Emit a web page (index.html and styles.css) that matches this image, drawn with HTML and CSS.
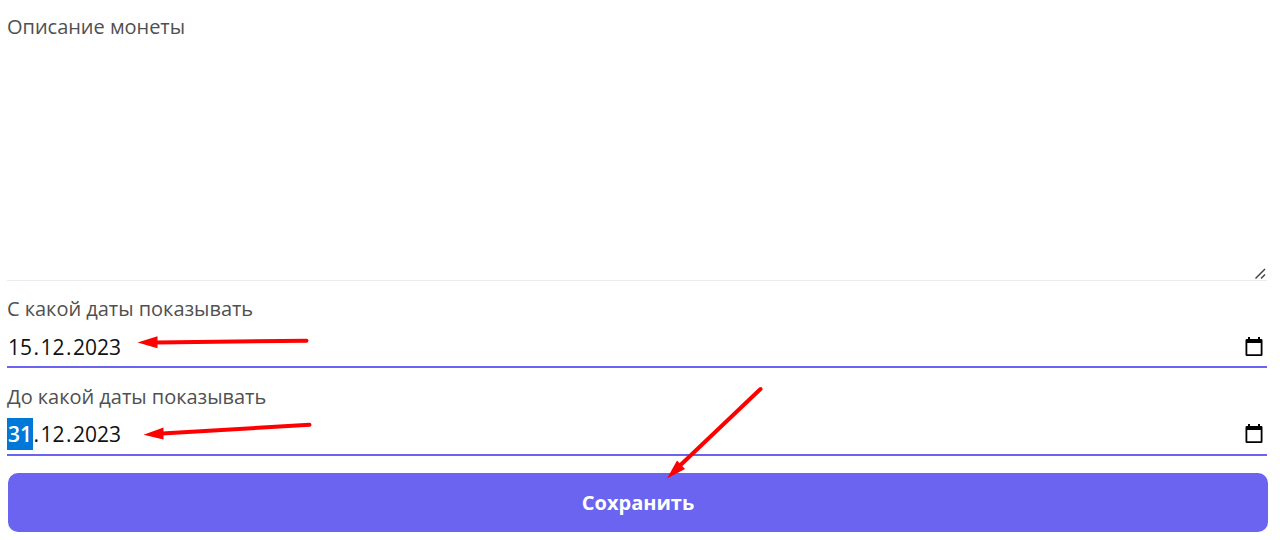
FILE: index.html
```html
<!DOCTYPE html>
<html lang="ru">
<head>
    <meta charset="UTF-8">
    <meta name="viewport" content="width=device-width, initial-scale=1.0">
    <title>Монета</title>
    <link rel="stylesheet" href="styles.css">
</head>
<body>

<form class="coin-form">
    <!-- Description -->
    <div class="field field-description">
        <label>Описание монеты</label>
        <svg class="resize-grip" width="12" height="12" viewBox="0 0 12 12">
            <path d="M.5 10.500L10 1M6 10.500L10 6.500"/>
        </svg>
    </div>

    <!-- Dates -->
    <div class="field field-date">
        <label>С какой даты показывать</label>
        <div class="date-input">
            <div class="date-value"><span>15</span>.<span>12</span>.<span>2023</span></div>
            <svg class="calendar" width="18" height="20" viewBox="0 0 18 20">
                <path d="M3 0h2v2h8V0h2v2h1.200q1.300 0 1.300 1.300V17.700q0 1.300-1.300 1.300H1.800Q.5 19 .5 17.700V3.300Q.5 2 1.800 2H3zM2.300 6V17.200H15.700V6z"/>
            </svg>
        </div>
    </div>
    <div class="field field-date">
        <label>До какой даты показывать</label>
        <div class="date-input">
            <div class="date-value"><span class="selected">31</span>.<span>12</span>.<span>2023</span></div>
            <svg class="calendar" width="18" height="20" viewBox="0 0 18 20">
                <path d="M3 0h2v2h8V0h2v2h1.200q1.300 0 1.300 1.300V17.700q0 1.300-1.300 1.300H1.800Q.5 19 .5 17.700V3.300Q.5 2 1.800 2H3zM2.300 6V17.200H15.700V6z"/>
            </svg>
        </div>
    </div>

    <button type="button" class="save">Сохранить</button>
</form>

<!-- Arrows over the form -->
<svg class="arrows" width="1280" height="540" viewBox="0 0 1280 540">
    <path class="shaft" d="M156 342.500L306.500 340.700M162 433.500L309.500 424.800M679 466.500L760.500 389"/>
    <path class="head" d="M137.500 342.500L157.500 336.300V348.300zM143.500 434.800L163.500 427.500V439.500zM667 478.500L677 460.500L685 469z"/>
</svg>

</body>
</html>
```

FILE: styles.css
```css
* {
    box-sizing: border-box;
}

body {
    margin: 0;
    background-color: #fff;
    font-family: "Open Sans", "Noto Sans", sans-serif;
    font-size: 20px;
    overflow: hidden;
}

.coin-form {
    padding: 0 13px 0 7px;
}

.field {
    display: flex;
    flex-direction: column;
}

.field label {
    color: #505050;
    line-height: 28px;
    letter-spacing: -0.03px;
}

/* Description */
.field-description {
    height: 281px;
    padding-top: 13px;
    justify-content: space-between;
    border-bottom: 1px solid #ececec;
}

.resize-grip {
    align-self: flex-end;
    fill: none;
    stroke: #444;
    stroke-width: 1.5;
}

/* Date fields */
.field-date {
    height: 87px;
    padding-top: 14px;
    border-bottom: 2px solid #6a64f1;
}

.field-date + .field-date {
    height: 88px;
    padding-top: 15px;
}

.date-input {
    display: flex;
    flex: 1;
    align-items: center;
    justify-content: space-between;
    padding: 4px 5px 0 0;
}

.field-date + .field-date .date-input {
    padding-top: 3px;
}

.date-value {
    color: #111;
    font-size: 21px;
    line-height: 32px;
}

.date-value span {
    display: inline-block;
    margin-right: 0.5px;
    padding: 0 1px;
}

.date-value span + span {
    margin-left: 0.5px;
}

.date-value .selected {
    width: 26px;
    background-color: #0078d7;
    color: #fff;
    font-weight: 600;
    letter-spacing: -0.1px;
}

.calendar {
    margin-right: -0.5px;
    fill: #000;
}

/* Save button */
.save {
    display: block;
    width: 1260px;
    height: 59px;
    margin: 17px 0 0 1px;
    border: none;
    border-radius: 10px;
    background-color: #6a64f1;
    color: #fff;
    font-family: inherit;
    font-size: 20px;
    font-weight: 700;
}

/* Arrows */
.arrows {
    position: absolute;
    top: 0;
    left: 0;
    pointer-events: none;
}

.shaft {
    fill: none;
    stroke: #f00;
    stroke-width: 4;
    stroke-linecap: round;
}

.head {
    fill: #f00;
}
```
